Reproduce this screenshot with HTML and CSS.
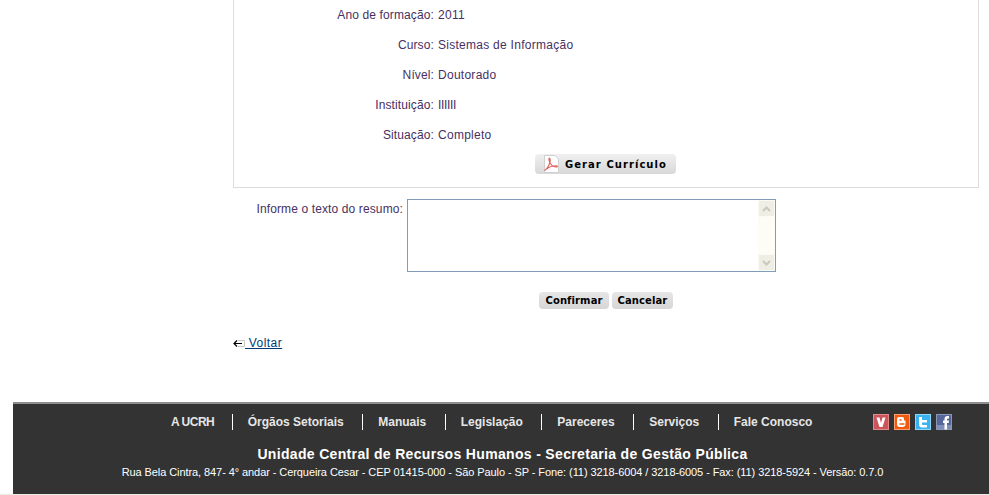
FILE: index.html
```html
<!DOCTYPE html>
<html lang="pt-BR">
<head>
    <meta charset="UTF-8">
    <title>UCRH - Resumo</title>
    <link rel="stylesheet" href="styles.css">
</head>
<body>
    <div class="content">
        <div class="panel">
            <div class="row"><span class="label">Ano de formação:</span><span class="value">2011</span></div>
            <div class="row"><span class="label">Curso:</span><span class="value">Sistemas de Informação</span></div>
            <div class="row"><span class="label">Nível:</span><span class="value">Doutorado</span></div>
            <div class="row"><span class="label">Instituição:</span><span class="value value-tight">IIIIII</span></div>
            <div class="row"><span class="label">Situação:</span><span class="value">Completo</span></div>
            <div class="panel-actions">
                <button class="btn btn-pdf" type="button">
                    <svg class="pdf-icon" width="17" height="18" viewBox="0 0 17 18">
                        <path d="M1.500.5h10.500l3.500 3.500v13.500h-14z" fill="#fff" stroke="#cfcfcf"/>
                        <path d="M1.500 15.500c2.500-1.500 4.500-5 5.500-8.500.4-2 .2-4-.6-4-.8 0-.6 3 1 5.500 1.500 2.300 3.500 3.500 6 3.500 1.500 0 1.500-1.300-.5-1.300-3 0-7 1.300-10 3.500" fill="none" stroke="#e0605a" stroke-width="1.100"/>
                    </svg>
                    Gerar Currículo
                </button>
            </div>
        </div>

        <div class="summary">
            <label class="summary-label" for="resumo">Informe o texto do resumo:</label>
            <div class="textbox">
                <textarea id="resumo" class="summary-text"></textarea>
                <div class="scrollbar">
                    <span class="scroll-btn">
                        <svg width="9" height="6" viewBox="0 0 9 6"><path d="M1 5l3.500-3.500L8 5" fill="none" stroke="#c9c9bd" stroke-width="2"/></svg>
                    </span>
                    <span class="scroll-btn">
                        <svg width="9" height="6" viewBox="0 0 9 6"><path d="M1 1l3.500 3.500L8 1" fill="none" stroke="#c9c9bd" stroke-width="2"/></svg>
                    </span>
                </div>
            </div>
        </div>

        <div class="actions">
            <button class="btn btn-small" type="button">Confirmar</button>
            <button class="btn btn-small" type="button">Cancelar</button>
        </div>

        <div class="back">
            <svg width="12" height="9" viewBox="0 0 12 9">
                <path d="M5 1.500h6.500v6H5" fill="none" stroke="#c8c8c8"/>
                <path d="M9 4.500H1M4 1.500l-3 3 3 3" fill="none" stroke="#000" stroke-width="1.200"/>
            </svg><a href="#">&nbsp;Voltar</a>
        </div>
    </div>

    <div class="footer">
        <div class="footer-top">
            <ul class="footer-nav">
                <li><a class="nav-first" href="#">A UCRH</a></li>
                <li><a href="#">Órgãos Setoriais</a></li>
                <li><a href="#">Manuais</a></li>
                <li><a href="#">Legislação</a></li>
                <li><a href="#">Pareceres</a></li>
                <li><a href="#">Serviços</a></li>
                <li><a href="#">Fale Conosco</a></li>
            </ul>
            <div class="social">
                <svg width="16" height="16" viewBox="0 0 16 16"><rect width="16" height="16" fill="#cb555a"/><rect x=".5" y=".5" width="15" height="15" fill="none" stroke="#e08a8c"/><path d="M3.500 3.500h3L8 9l1.500-5.500h3L9.500 13h-3z" fill="#fff"/></svg>
                <svg width="16" height="16" viewBox="0 0 16 16"><rect width="16" height="16" fill="#f05a10"/><rect x=".5" y=".5" width="15" height="15" fill="none" stroke="#f9a070"/><path d="M5 3h3.500Q10 3 10 5v1.500h1.500V10q0 3-3 3h-3Q3 13 3 10V5q0-2 2-2z" fill="#fff"/><path d="M5.500 6h2M5.500 10h5" stroke="#f05a10" stroke-width="1.300"/></svg>
                <svg width="16" height="16" viewBox="0 0 16 16"><rect width="16" height="16" fill="#3ab2ef"/><rect x=".5" y=".5" width="15" height="15" fill="none" stroke="#8fd6fb"/><path d="M4 3h3v3h5v2.500H7V10q0 1 1 1h4v2.500H7Q4 13.500 4 10z" fill="#fff"/></svg>
                <svg width="16" height="16" viewBox="0 0 16 16"><rect width="16" height="16" fill="#55669a"/><rect y="11" width="16" height="5" fill="#7f8fb6"/><rect x=".5" y=".5" width="15" height="15" fill="none" stroke="#8b97b8"/><path d="M8.500 15.500V9H7V6.500h1.500V5q0-3 3-3h1.500v2.500h-1q-1 0-1 1v1h2L12.700 9H11v6.500z" fill="#fff"/></svg>
            </div>
        </div>
        <div class="footer-title">Unidade Central de Recursos Humanos - Secretaria de Gestão Pública</div>
        <div class="footer-address">Rua Bela Cintra, 847- 4° andar - Cerqueira Cesar - CEP 01415-000 - São Paulo - SP - Fone: (11) 3218-6004 / 3218-6005 - Fax: (11) 3218-5924 - Versão: 0.7.0</div>
    </div>
    <div class="page-end"></div>
</body>
</html>
```

FILE: styles.css
```css
* {
    box-sizing: border-box;
}

html, body {
    height: 495px;
    overflow: hidden;
}

body {
    margin: 0;
    background: #fff;
    font-family: "Liberation Sans", Arial, sans-serif;
    font-size: 12px;
    color: #472f63;
}

.content {
    margin-left: 233px;
    width: 746px;
    height: 402px;
}

.panel {
    height: 188px;
    border: 1px solid #dcdcdc;
    border-top: 0;
}

.row {
    display: flex;
    height: 30px;
    line-height: 30px;
    gap: 4px;
}

.label {
    width: 200px;
    text-align: right;
    letter-spacing: .12px;
}

.value {
    letter-spacing: .27px;
}

.value-tight {
    letter-spacing: -.33px;
}

.panel-actions {
    display: flex;
    padding: 4px 0 0 301px;
}

.btn {
    border: 0;
    border-radius: 4px;
    background: linear-gradient(#f0f0f0, #d8d8d8);
    font-family: "DejaVu Sans", Verdana, sans-serif;
    font-weight: bold;
    color: #000;
    padding: 0;
}

.btn-pdf {
    display: flex;
    align-items: center;
    width: 141px;
    height: 20px;
    padding-left: 8px;
    font-size: 10px;
    letter-spacing: 1.050px;
    gap: 5px;
}

.btn-small {
    height: 17px;
    font-size: 10px;
    letter-spacing: .1px;
    background: linear-gradient(#e6e6e6, #d6d6d6);
}

.summary {
    display: flex;
    margin-top: 11px;
    height: 73px;
}

.summary-label {
    width: 170px;
    padding-top: 3px;
    text-align: right;
    line-height: 14px;
    letter-spacing: .12px;
}

.textbox {
    display: flex;
    width: 369px;
    margin-left: 4px;
    border: 1px solid #7f9db9;
}

.summary-text {
    flex: 1;
    border: 0;
    border-radius: 0;
    outline: 0;
    resize: none;
    padding: 0;
    background: #fff;
}

.scrollbar {
    display: flex;
    flex-direction: column;
    justify-content: space-between;
    width: 17px;
    background: #fdfdf6;
}

.scroll-btn {
    display: flex;
    align-items: center;
    justify-content: center;
    height: 17px;
    background: #eeeee4;
    border: 1px solid #fbfbf3;
}

.actions {
    display: flex;
    gap: 3px;
    margin-top: 20px;
    padding-left: 306px;
}

.actions .btn-small:first-child {
    width: 70px;
}

.actions .btn-small:last-child {
    width: 61px;
}

.back {
    margin-top: 26px;
    display: flex;
    align-items: center;
    line-height: 16px;
}

.back a {
    color: #003a75;
    letter-spacing: .45px;
}

.footer {
    margin-left: 13px;
    height: 92px;
    border-top: 2px solid #8e8e8e;
    background: #333;
    color: #fff;
    text-align: center;
}

.footer-top {
    display: flex;
    height: 34px;
    padding: 10px 37px 0 141px;
    justify-content: space-between;
}

.footer-nav {
    display: flex;
    margin: 0;
    padding: 0;
    list-style: none;
    height: 16px;
    align-items: center;
}

.footer-nav li {
    padding: 0 18.500px 0 15px;
    border-left: 1px solid #fff;
    line-height: 16px;
}

.footer-nav li:first-child {
    border-left: 0;
    padding: 0 17.500px 0 17px;
}

.footer-nav a {
    color: #e6e6e6;
    font-weight: bold;
    text-decoration: none;
}

.footer-nav .nav-first {
    letter-spacing: -.5px;
}

.social {
    display: flex;
    gap: 5px;
}

.footer-title {
    margin-top: 6px;
    padding-left: 3px;
    font-size: 14px;
    font-weight: bold;
    line-height: 20px;
    letter-spacing: .33px;
}

.footer-address {
    padding-left: 3px;
    font-size: 11px;
    letter-spacing: -.08px;
    line-height: 16px;
}

.page-end {
    height: 1px;
    background: #ecece4;
}
```
